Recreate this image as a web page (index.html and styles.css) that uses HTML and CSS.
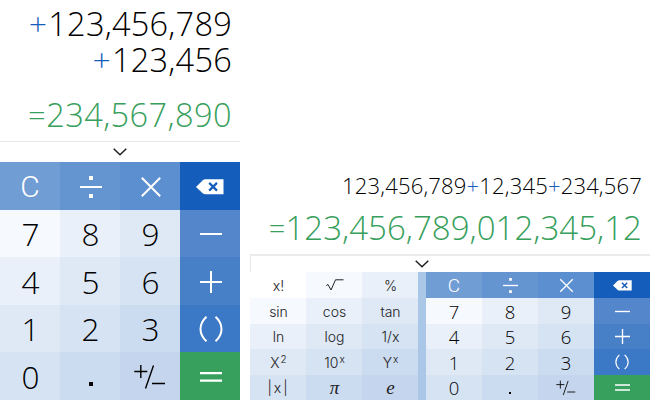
FILE: index.html
```html
<!DOCTYPE html>
<html lang="en">
<head>
<meta charset="utf-8">
<title>Calculator</title>
<link rel="stylesheet" href="styles.css">
</head>
<body>
<svg class="defs" width="0" height="0">
  <symbol id="chev" viewBox="0 0 14 8"><path d="M.7.7 7 6.8 13.300.7" fill="none" stroke="#222" stroke-width="1.5"/></symbol>
  <symbol id="div" viewBox="0 0 22 22"><path d="M0 11H22" stroke="currentColor" stroke-width="2"/><path d="M9 0h4v4H9zM9 18h4v4H9z" fill="currentColor"/></symbol>
  <symbol id="mul" viewBox="0 0 22 22"><path d="M1.800 1.800 20.200 20.200M20.200 1.800 1.800 20.200" stroke="currentColor" stroke-width="2"/></symbol>
  <symbol id="min" viewBox="0 0 22 22"><path d="M0 11H22" stroke="currentColor" stroke-width="2"/></symbol>
  <symbol id="add" viewBox="0 0 22 22"><path d="M0 11H22M11 0V22" stroke="currentColor" stroke-width="2"/></symbol>
  <symbol id="eq" viewBox="0 0 22 22"><path d="M0 7.200H22M0 14.600H22" stroke="currentColor" stroke-width="2.200"/></symbol>
  <symbol id="par" viewBox="0 0 24 26"><path d="M7.500.7C-.5 8-.5 18 7.500 25.300M16.500.7C24.500 8 24.500 18 16.500 25.300" fill="none" stroke="currentColor" stroke-width="2"/></symbol>
  <symbol id="del" viewBox="0 0 28 16"><path d="M0 8 7 1Q8 .3 9.500.3H27.500V15.300H9.500Q8 15.300 7 14.500Z" fill="#fff"/><path d="M13.200 3.900 21 11.600M21 3.900 13.200 11.600" stroke="#155dbb" stroke-width="2.200"/></symbol>
  <symbol id="sign" viewBox="0 0 32 26"><path d="M.3 7.500H13.300M6.800 1V14M11.500 24.500 19.500 1.500M18 19.500H31" stroke="#000" stroke-width="1.400"/></symbol>
  <symbol id="root" viewBox="0 0 18 12"><path d="M.3 6.500 2 5.500 5 11 9.500.8H17.500" fill="none" stroke="#222" stroke-width="1"/></symbol>
</svg>
<main class="stage">
  <section class="phone">
    <div class="screen">
      <div class="line"><span class="op">+</span><span>123,456,789</span></div>
      <div class="line"><span class="op">+</span><span>123,456</span></div>
      <div class="line total"><span class="eq">=</span><span>234,567,890</span></div>
    </div>
    <div class="handle"><svg class="chev"><use href="#chev"/></svg></div>
    <div class="pad">
      <div class="key a1 fn">C</div><div class="key a2"><svg class="ic"><use href="#div"/></svg></div><div class="key a3"><svg class="ic"><use href="#mul"/></svg></div><div class="key a4"><svg class="del"><use href="#del"/></svg></div>
      <div class="key b1">7</div><div class="key b2">8</div><div class="key b3">9</div><div class="key b4"><svg class="ic"><use href="#min"/></svg></div>
      <div class="key b2">4</div><div class="key b3">5</div><div class="key c3">6</div><div class="key c4"><svg class="ic"><use href="#add"/></svg></div>
      <div class="key b3">1</div><div class="key c3">2</div><div class="key d3">3</div><div class="key d4"><svg class="par"><use href="#par"/></svg></div>
      <div class="key c3">0</div><div class="key d3"><i class="dot"></i></div><div class="key e3"><svg class="sign"><use href="#sign"/></svg></div><div class="key e4"><svg class="ic"><use href="#eq"/></svg></div>
    </div>
  </section>
  <section class="wide">
    <div class="screen">
      <div class="line"><span>123,456,789</span><span class="op">+</span><span>12,345</span><span class="op">+</span><span>234,567</span></div>
      <div class="line total"><span class="eq">=</span><span>123,456,789,012,345,12</span></div>
    </div>
    <div class="handle"><svg class="chev"><use href="#chev"/></svg></div>
    <div class="pads">
      <div class="sci">
        <div class="key b0">x!</div><div class="key b1"><svg class="root"><use href="#root"/></svg></div><div class="key b2">%</div>
        <div class="key b1">sin</div><div class="key b2">cos</div><div class="key b3">tan</div>
        <div class="key b2">ln</div><div class="key b3">log</div><div class="key c3">1/x</div>
        <div class="key b3"><span>X<sup>2</sup></span></div><div class="key c3"><span>10<sup>x</sup></span></div><div class="key d3"><span>Y<sup>x</sup></span></div>
        <div class="key c3 abs">|x|</div><div class="key d3 greek">π</div><div class="key e3 greek">e</div>
      </div>
      <div class="pad">
        <div class="key a1 fn">C</div><div class="key a2"><svg class="ic"><use href="#div"/></svg></div><div class="key a3"><svg class="ic"><use href="#mul"/></svg></div><div class="key a4"><svg class="del"><use href="#del"/></svg></div>
        <div class="key b1">7</div><div class="key b2">8</div><div class="key b3">9</div><div class="key b4"><svg class="ic"><use href="#min"/></svg></div>
        <div class="key b2">4</div><div class="key b3">5</div><div class="key c3">6</div><div class="key c4"><svg class="ic"><use href="#add"/></svg></div>
        <div class="key b3">1</div><div class="key c3">2</div><div class="key d3">3</div><div class="key d4"><svg class="par"><use href="#par"/></svg></div>
        <div class="key c3">0</div><div class="key d3"><i class="dot"></i></div><div class="key e3"><svg class="sign"><use href="#sign"/></svg></div><div class="key e4"><svg class="ic"><use href="#eq"/></svg></div>
      </div>
    </div>
  </section>
</main>
</body>
</html>
```
FILE: styles.css
```css
* { box-sizing: border-box; }
body { margin: 0; background: #fff; color: #000; font-family: "Open Sans", "Noto Sans", sans-serif; font-weight: 300; }
.defs { display: block; width: 0; height: 0; }
svg { display: block; }
.stage { display: flex; gap: 10px; width: 650px; height: 400px; overflow: hidden; }
.phone { width: 240px; display: flex; flex-direction: column; }
.wide { width: 400px; display: flex; flex-direction: column; }
.line { display: flex; justify-content: flex-end; white-space: nowrap; }
.op { color: #155dbb; }
.total { color: #37a05c; }

.phone .screen { height: 141px; padding: 6px 8px 0 0; }
.phone .line { font-size: 32.5px; line-height: 36px; height: 36px; letter-spacing: .25px; }
.phone .op { font-size: 32px; margin-right: 1px; }
.phone .eq { font-size: 31px; }
.phone .line.total { margin-top: 19px; letter-spacing: .45px; }
.handle { display: flex; justify-content: center; border-top: 1px solid #e6e6e6; }
.phone .handle { height: 21px; padding-top: 6px; }
.chev { width: 14px; height: 8px; }

.pad { display: grid; grid-template-columns: repeat(4, 1fr); }
.phone .pad { height: 238px; grid-template-rows: 48px 47px 48px 47px 48px; }
.key { display: flex; align-items: center; justify-content: center; min-width: 0; min-height: 0; }
.phone .key { font-size: 31.5px; line-height: 46px; padding: 1px 0 0 1px; }
.phone .ic { width: 22px; height: 22px; }
.phone .del { width: 28px; height: 16px; margin-right: 2px; }
.phone .par { width: 24px; height: 26px; }
.phone .sign { width: 32px; height: 26px; margin-right: 1px; }
.key.fn { font-family: Roboto, "Liberation Sans", sans-serif; color: #fff; }
.phone .key.fn { font-size: 30px; padding-left: 0; }
.dot { width: 4px; height: 4px; background: #000; margin-top: 15px; }

.wide .screen { height: 254px; padding: 170px 8px 0 0; }
.wide .line { font-size: 22px; line-height: 30px; height: 30px; letter-spacing: .18px; }
.wide .line.total { font-size: 33px; line-height: 44px; height: 44px; margin-top: 6px; letter-spacing: .04px; }
.wide .eq { font-size: 29px; }
.wide .handle { height: 18px; border-top: 2px solid #ebebeb; border-left: 1px solid #e6e6e6; padding: 4px 57px 0 0; }
.pads { display: flex; gap: 8px; height: 128px; background: #abc7e7; }
.sci { width: 168px; display: grid; grid-template-columns: repeat(3, 56px); }
.wide .pad { width: 224px; }
.sci, .wide .pad { grid-template-rows: 26px 26px 25px 26px 25px; }
.wide .pad .key { font-size: 18.5px; line-height: 25px; }
.wide .pad .key.fn { font-size: 19px; }
.wide .ic { width: 15px; height: 15px; }
.wide .del { width: 19px; height: 11px; }
.wide .par { width: 14px; height: 16px; }
.wide .sign { width: 20px; height: 16px; }
.wide .dot { width: 2px; height: 2px; margin-top: 10px; }
.sci .key { font-family: Inter, Roboto, sans-serif; font-size: 14px; color: #222; padding-left: 1px; }
.root { width: 18px; height: 12px; }
.sci sup { font-size: 10px; line-height: 0; vertical-align: 5px; margin-left: 1px; }
.sci .abs { letter-spacing: 2px; }
.sci .greek { font-family: "Liberation Serif", serif; font-style: italic; font-size: 19px; font-weight: 400; }

.a1 { background: #719dd5; color: #fff; }
.a2 { background: #6495d1; color: #fff; }
.a3 { background: #5c8fcf; color: #fff; }
.a4 { background: #155dbb; color: #fff; }
.b0 { background: #fff; }
.b1 { background: #f6f9fe; }
.b2 { background: #e9f0f9; }
.b3 { background: #dfe9f6; }
.b4 { background: #5486cb; color: #fff; }
.c3 { background: #d6e3f3; }
.c4 { background: #4880c8; color: #fff; }
.d3 { background: #cbdbf0; }
.d4 { background: #3b78c5; color: #fff; }
.e3 { background: #c4d5ed; }
.e4 { background: #37a05c; color: #fff; }
```
